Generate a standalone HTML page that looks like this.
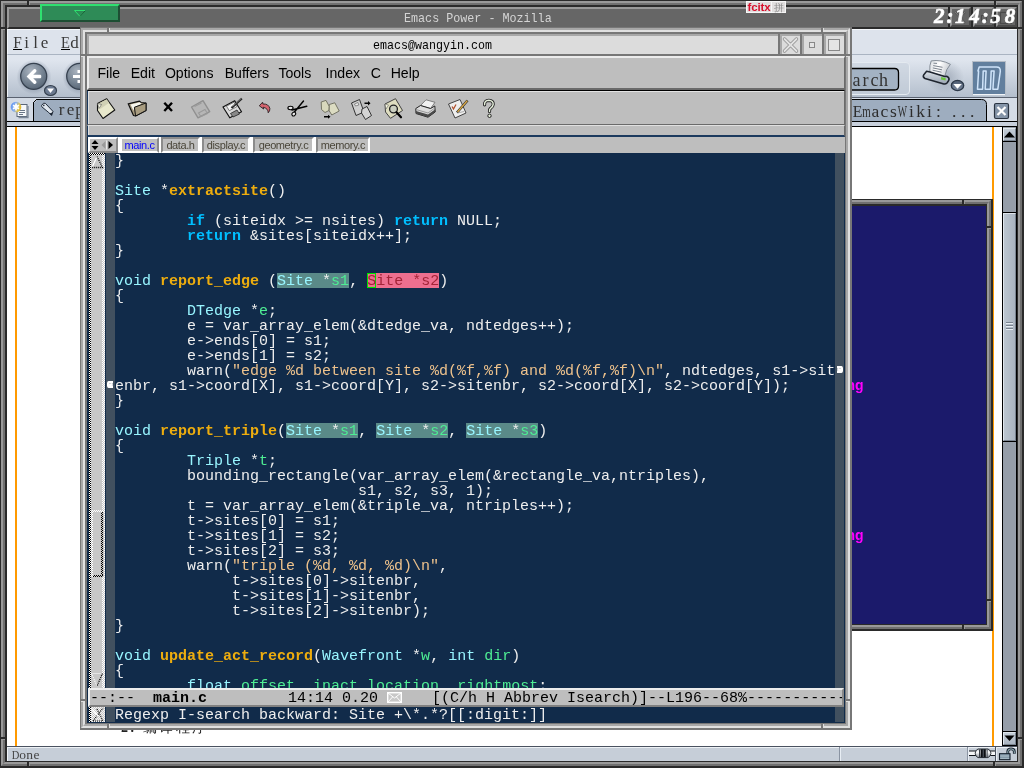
<!DOCTYPE html>
<html>
<head>
<meta charset="utf-8">
<title>Emacs Power - Mozilla</title>
<style>
html,body{margin:0;padding:0;}
body{width:1024px;height:768px;overflow:hidden;position:relative;background:#fff;font-family:"Liberation Sans",sans-serif;}
.a{position:absolute;}
div,pre,span,svg{box-sizing:border-box;}
/* generic nested ring frame */
.ring{position:absolute;left:0;top:0;right:0;bottom:0;border-style:solid;}
/* ---------- Mozilla outer window frame ---------- */
#mzA{left:0;top:0;width:1024px;height:768px;border-style:solid;border-color:#2a2a2a;border-width:1px 2px 2px 1px;background:#707070;}
#mzB{left:1px;top:1px;width:1021px;height:765px;border:2px solid;border-color:#999 #707070 #707070 #999;}
#mzC{left:3px;top:3px;width:1017px;height:761px;border:2px solid;border-color:#707070 #999 #999 #707070;}
#mzD{left:5px;top:5px;width:1013px;height:757px;border-style:solid;border-color:#2a2a2a;border-width:2px 1px 1px 2px;background:#fff;}
.nd{background:#2a2a2a;} .nl{background:#999;}
#mz-title{left:7px;top:7px;width:1010px;height:22px;background:#666;border-top:2px solid #999;border-left:2px solid #999;border-bottom:2px solid #2a2a2a;}
#mz-title-text{left:404px;top:10.5px;height:16px;color:#d4d4d4;font-family:"Liberation Mono",monospace;font-size:11.72px;letter-spacing:0;transform:scaleY(1.12);transform-origin:0 50%;white-space:nowrap;line-height:16px;}
#green{left:40px;top:4px;width:80px;height:18px;background:#2e8b57;border:2px solid;border-color:#2fe070 #1d4e33 #1d4e33 #2fe070;}
#mz-menu{left:7px;top:29px;width:1010px;height:25px;background:#dde3ec;border-top:1px solid #f4f7fa;border-left:1px solid #f4f7fa;}
#mz-tool{left:7px;top:54px;width:1010px;height:43px;background:linear-gradient(#dfe5ee,#dfe5ee 12%,#b4bfcd);border-top:1px solid #aab4c2;border-left:1px solid #eef2f6;}
#mz-tabs{left:7px;top:97px;width:1010px;height:30px;background:#d6dde7;border-top:1px solid #5a6270;}
#mz-content{left:7px;top:127px;width:995px;height:619px;background:#fff;}
#mz-status{left:7px;top:746px;width:1010px;height:15px;background:#c6ced8;border-top:1px solid #4a5260;box-shadow:inset 1px 1px 0 #eef2f6;}
.mztxt{font-family:"Liberation Serif",serif;color:#333;white-space:nowrap;}
.orange{background:#ff9a00;width:2px;top:127px;height:619px;}
/* ---------- blue window ---------- */
#blA{left:845px;top:199px;width:148px;height:432px;border-style:solid;border-color:#2a2a2a;border-width:1px 2px 2px 1px;}
#blB{left:846px;top:200px;width:145px;height:429px;border:2px solid;border-color:#999 #707070 #707070 #999;}
#blC{left:848px;top:202px;width:141px;height:425px;border:2px solid;border-color:#707070 #999 #999 #707070;}
#blD{left:850px;top:204px;width:137px;height:421px;border-style:solid;border-color:#2a2a2a;border-width:2px 1px 1px 2px;background:#1b1a6b;}
.mag{color:#ff00ff;font-weight:bold;font-size:14px;line-height:15px;left:846.5px;}
.mtb{top:7px;height:20px;border:2px solid;border-color:#999 #4a4a4a #4a4a4a #999;}
.clk{font-family:"Liberation Serif",serif;font-weight:bold;font-style:italic;font-size:21px;line-height:26px;color:#fff;white-space:nowrap;-webkit-text-stroke:0.6px #fff;}
.clk span{display:inline-block;width:14.4px;text-align:center;}
.clk i{display:inline-block;width:6.6px;text-align:center;}
</style>
</head>
<body>
<div id="root" class="a" style="left:0;top:0;width:1024px;height:768px;will-change:transform">
<!-- Mozilla frame -->
<div class="a" id="mzA"></div><div class="a" id="mzB"></div><div class="a" id="mzC"></div><div class="a" id="mzD"></div>
<!-- frame notches -->
<div class="a nd" style="left:27px;top:1px;width:2px;height:4px"></div><div class="a nl" style="left:29px;top:1px;width:1px;height:4px"></div>
<div class="a nd" style="left:994px;top:1px;width:2px;height:4px"></div><div class="a nl" style="left:996px;top:1px;width:1px;height:4px"></div>
<div class="a nd" style="left:1px;top:27px;width:4px;height:2px"></div><div class="a nl" style="left:1px;top:29px;width:4px;height:1px"></div>
<div class="a nd" style="left:1018px;top:27px;width:4px;height:2px"></div><div class="a nl" style="left:1018px;top:29px;width:4px;height:1px"></div>
<div class="a nd" style="left:1px;top:737px;width:4px;height:2px"></div><div class="a nl" style="left:1px;top:739px;width:4px;height:1px"></div>
<div class="a nd" style="left:1018px;top:737px;width:4px;height:2px"></div><div class="a nl" style="left:1018px;top:739px;width:4px;height:1px"></div>
<div class="a nd" style="left:27px;top:762px;width:2px;height:4px"></div><div class="a nl" style="left:29px;top:762px;width:1px;height:4px"></div>
<div class="a nd" style="left:993px;top:762px;width:2px;height:4px"></div><div class="a nl" style="left:995px;top:762px;width:1px;height:4px"></div>
<!-- Mozilla title -->
<div class="a" id="mz-title"></div>
<div class="a" id="mz-title-text">Emacs Power - Mozilla</div>
<div class="a" id="green"><svg class="a" style="left:32px;top:4px" width="12" height="8" viewBox="0 0 12 8"><path d="M0.5 0.5 L11.5 0.5 L6 6.5 Z" fill="none" stroke="#2fe070" stroke-width="1"/><path d="M6 6.5 L11.5 0.5" stroke="#1d4e33" stroke-width="1" fill="none"/></svg></div>
<!-- Mozilla chrome -->
<div class="a" id="mz-menu"></div>
<div class="a" id="mz-tool"></div>
<div class="a" id="mz-tabs"></div>
<div class="a" id="mz-content"></div>
<div class="a orange" style="left:15px"></div>
<div class="a orange" style="left:992px"></div>
<div class="a" id="mz-status"></div>
<style>
.cell span{display:inline-block;width:9px;text-align:center;}
.cell{font-family:"Liberation Serif",serif;font-size:17px;line-height:20px;color:#3a3a3a;white-space:nowrap;height:20px;}
.cell u{text-decoration:none;display:inline-block;width:9px;text-align:center;}
#mz-tabline{left:7px;top:121px;width:1010px;height:6px;background:#c8d0dc;border-top:1px solid #000;border-bottom:1px solid #000;}
.mztab{background:#9eadbf;}
#sb{left:1002px;top:127px;width:15px;height:619px;background:#969ea9;border-left:1px solid #000;border-right:1px solid #000;}
.sbbtn{left:1003px;width:13px;height:13px;background:linear-gradient(#c4ced8,#aab4c0);border:1px solid;border-color:#e0e6ec #7a8490 #7a8490 #e0e6ec;}
</style>
<!-- Mozilla menu text -->
<div class="a cell" style="left:13px;top:32.5px"><u><b style="display:inline-block;font-weight:normal;width:17px;margin-left:-4px;text-align:center;transform:scaleX(0.9)">F</b></u><span>i</span><span>l</span><span>e</span></div>
<div class="a cell" style="left:61px;top:32.5px"><u><b style="display:inline-block;font-weight:normal;width:17px;margin-left:-4px;text-align:center;transform:scaleX(0.86)">E</b></u><span>d</span></div>
<div class="a" style="left:13px;top:49px;width:9px;height:1.3px;background:#000"></div><div class="a" style="left:61px;top:49px;width:9px;height:1.3px;background:#000"></div>
<!-- Mozilla toolbar buttons -->
<svg class="a" style="left:7px;top:55px" width="80" height="42" viewBox="0 0 80 42">
 <defs>
  <radialGradient id="bg1" cx="0.4" cy="0.3" r="0.8"><stop offset="0" stop-color="#a9b3bf"/><stop offset="0.6" stop-color="#72808f"/><stop offset="1" stop-color="#505e6e"/></radialGradient>
  <radialGradient id="halo" cx="0.5" cy="0.5" r="0.5"><stop offset="0.7" stop-color="#8894a6" stop-opacity="0.55"/><stop offset="1" stop-color="#8894a6" stop-opacity="0"/></radialGradient>
 </defs>
 <circle cx="27" cy="22" r="17.5" fill="url(#halo)"/>
 <circle cx="26.7" cy="21.3" r="13" fill="url(#bg1)" stroke="#36414f" stroke-width="1.3"/>
 <path d="M19.6 21.5 L26.8 14.3 Q28.3 13.6 29.3 15 Q29.8 16.2 29 17 L26.2 19.8 L33.5 19.8 Q34.3 19.9 34.3 21.5 Q34.3 23.1 33.5 23.2 L26.2 23.2 L29 26 Q29.8 26.9 29.3 28 Q28.3 29.4 26.8 28.7 Z" fill="#fff"/>
 <ellipse cx="43.5" cy="35.5" rx="6" ry="5" fill="#6c7a90" stroke="#36414f" stroke-width="1.2"/>
 <path d="M40 33.5 L47 33.5 L43.5 38 Z" fill="#fff"/>
 <circle cx="73" cy="22" r="17.5" fill="url(#halo)"/>
 <circle cx="72.7" cy="21.3" r="13" fill="url(#bg1)" stroke="#36414f" stroke-width="1.3"/>
 <path d="M66 20 L74 20 L74 23 L66 23 Z M70.5 15 L73 15 L73 18 L70.5 18 Z M70.5 25 L73 25 L73 28 L70.5 28 Z" fill="#fff"/>
</svg>
<!-- Mozilla tab bar -->
<svg class="a" style="left:7px;top:98px" width="80" height="24" viewBox="0 0 80 24">
 <defs><linearGradient id="orb" x1="0" y1="0.3" x2="1" y2="0.6"><stop offset="0" stop-color="#5e94f4"/><stop offset="0.45" stop-color="#8eb2ea"/><stop offset="0.75" stop-color="#e4c850"/><stop offset="1" stop-color="#e0b428"/></linearGradient></defs>
 <rect x="0" y="0" width="27" height="23" fill="#d3dae4"/>
 <path d="M26.5 24 L26.5 4.5 L29.5 1.5 L80 1.5" fill="#9eadbf" stroke="#000" stroke-width="1"/>
 <rect x="27" y="2" width="53" height="22" fill="#9eadbf"/><path d="M27 2 L27 5 L30 2 Z" fill="#d3dae4"/><path d="M26.5 24 L26.5 4.5 L29.5 1.5 L80 1.5" fill="none" stroke="#000" stroke-width="1"/>
 <rect x="10" y="6.5" width="10" height="12" fill="#f6f8fa" stroke="#5a6678" stroke-width="1"/>
 <path d="M12 12.5h6M12 14.5h6M12 16.5h4" stroke="#6a7688" stroke-width="1"/>
 <path d="M21 8 V19.5 H11.5" stroke="#7c8898" stroke-width="1.3" fill="none"/>
 <circle cx="9" cy="9" r="5.3" fill="url(#orb)"/>
 <path d="M9 5.5v7M6 7.3l6 3.4M12 7.3l-6 3.4" stroke="#fff" stroke-width="1.7"/>
 <path d="M34.6 7.4 L36.6 5.2 L38.4 5.4 L46 13.4 L44.6 17.4 L41.8 14.6 L34.8 8.8 Z" fill="#dfe6ee" stroke="#222c3a" stroke-width="1"/><circle cx="36.8" cy="7.4" r="0.8" fill="#222c3a"/>
 <path d="M42 14.8 L44.6 17.8 L45.9 13.5 L44 15.2 Z" fill="#1a2432"/>
</svg>
<div class="a cell" style="left:57px;top:100px;font-size:17px;color:#333"><span>r</span><span>e</span><span>p</span></div>
<div class="a" id="mz-tabline"></div>
<!-- Mozilla right-side toolbar -->
<svg class="a" style="left:845px;top:55px" width="172" height="42" viewBox="0 0 172 42">
 <defs>
  <linearGradient id="pb" x1="0" y1="0" x2="0" y2="1"><stop offset="0" stop-color="#dce2e8"/><stop offset="1" stop-color="#98a2b0"/></linearGradient>
  <linearGradient id="pp" x1="0" y1="0" x2="1" y2="0.3"><stop offset="0" stop-color="#d8dce0"/><stop offset="0.5" stop-color="#fff"/><stop offset="1" stop-color="#c8ccd2"/></linearGradient><linearGradient id="dd" x1="0" y1="0" x2="0" y2="1"><stop offset="0" stop-color="#4c5a6e"/><stop offset="1" stop-color="#7c8aa0"/></linearGradient><radialGradient id="halo2" cx="0.5" cy="0.5" r="0.5"><stop offset="0.3" stop-color="#8e99a8" stop-opacity="0.45"/><stop offset="1" stop-color="#8e99a8" stop-opacity="0"/></radialGradient>
 </defs>
 <!-- search container -->
 <path d="M0 7.5 H61 Q64.5 7.5 64.5 11 V36 Q64.5 39.5 61 39.5 H0" fill="#c9d1dc" fill-opacity="0.55" stroke="#e4eaf0" stroke-width="1"/>
 <!-- search button -->
 <path d="M0 13.5 H49.5 Q53.5 13.5 53.5 17.5 V31 Q53.5 35 49.5 35 H0 Z" fill="#a3b2c3" stroke="#000" stroke-width="1.3"/>
 <!-- printer -->
 <ellipse cx="100" cy="22" rx="19" ry="17" fill="url(#halo2)"/>
 <path d="M86.200 5.900 Q96 4.300 105.400 9.300 Q101 14 99.700 21.500 L84.800 17 Q84.300 10 86.200 5.900 Z" fill="url(#pp)" stroke="#7c848e" stroke-width="0.900"/>
 <path d="M88.500 8.200 L92 8.400 M88.200 10.600 L97.500 12.300 M87.800 12.900 L97 14.800 M87.600 15.200 L96.500 17.200" stroke="#7c848e" stroke-width="1"/>
 <path d="M81.600 16.200 L85 17 L99.700 21.500 L102 21.300 Q105 23 103.700 25.500 L102 28 Q100.500 29.500 98 28.800 L80 23.500 Q77.500 22 78.600 20 Z" fill="url(#pb)" stroke="#1e242e" stroke-width="1.500" stroke-linejoin="round"/>
 <path d="M96.200 22 L100.800 23.200 L100.500 25.600 L96 24.400 Z" fill="#6cc43c"/>
 <ellipse cx="112.500" cy="30.500" rx="6.200" ry="5.100" fill="url(#dd)" stroke="#2c3848" stroke-width="1.300"/>
 <path d="M108.300 29 L116.800 29 L112.500 33.700 Z" fill="#fff"/>
 <!-- m logo -->
 <rect x="127.500" y="6.500" width="33" height="33" fill="#627f9e" stroke="#b4bcc6" stroke-width="1"/>
 <rect x="128" y="7" width="32" height="32" fill="#627f9e"/>
 <rect x="128" y="39" width="32" height="1.200" fill="#f0f4f8"/>
 <path d="M134.200 11.900 H151.500 Q155.600 11.900 155.300 16.500 L152.800 34.200 H147.900 L149.100 15.900 H146.200 L145.400 34.200 H140.200 L141.100 15.900 H138.200 L137.600 34.200 H132.500 L133.600 15.900 H132.900 Z" fill="none" stroke="#cfe4fa" stroke-width="1.500" stroke-linejoin="round"/>
</svg>
<div class="a cell" style="left:852px;top:70px;font-size:18px;color:#333;letter-spacing:0"><span>a</span><span>r</span><span>c</span><span>h</span></div>
<!-- Mozilla right tab -->
<svg class="a" style="left:845px;top:98px" width="172" height="24" viewBox="0 0 172 24">
 <path d="M0 1.500 H136.500 Q141.500 1.500 141.500 6.500 V24 H0 Z" fill="#9eadbf" stroke="#000" stroke-width="1"/>
 <rect x="149.500" y="5.500" width="14" height="15" rx="1.500" fill="#8494a8" stroke="#2a3442" stroke-width="1.200"/>
 <path d="M152.500 9 L160.500 17 M160.500 9 L152.500 17" stroke="#fff" stroke-width="2.200"/>
</svg>
<div class="a cell" style="left:853px;top:101px;font-size:17.5px;color:#2c2c2c"><span><b style="display:inline-block;font-weight:normal;width:21px;margin-left:-6px;text-align:center;transform:scaleX(0.9)">E</b></span><span><b style="display:inline-block;font-weight:normal;width:21px;margin-left:-6px;text-align:center;transform:scaleX(0.62)">m</b></span><span>a</span><span>c</span><span>s</span><span><b style="display:inline-block;font-weight:normal;width:21px;margin-left:-6px;text-align:center;transform:scaleX(0.56)">W</b></span><span>i</span><span>k</span><span>i</span><span>:</span><span> </span><span style="text-align:left">.</span><span style="text-align:left">.</span><span style="text-align:left">.</span></div>
<div class="a" id="mz-tabline2" style="left:845px;top:121px;width:172px;height:6px;background:#c8d0dc;border-top:1px solid #000;border-bottom:1px solid #000;"></div>
<!-- scrollbar -->
<div class="a" id="sb"></div>
<div class="a sbbtn" style="top:128px"></div>
<svg class="a" style="left:1004px;top:131px" width="11" height="7"><path d="M0 6.500 L5.500 0.500 L11 6.500 Z" fill="#000"/></svg>
<div class="a" style="left:1003px;top:141px;width:13px;height:1px;background:#000"></div><div class="a" style="left:1003px;top:212px;width:13px;height:1px;background:#000"></div><div class="a" style="left:1003px;top:441px;width:13px;height:1px;background:#000"></div>
<div class="a" style="left:1003px;top:213px;width:13px;height:228px;background:linear-gradient(90deg,#bcc6d0,#aab4c0);border:1px solid;border-color:#e0e6ec #7a8490 #7a8490 #e0e6ec;"></div>
<div class="a" style="left:1006px;top:322px;width:7px;height:1px;background:#7a8490;box-shadow:0 3px 0 #7a8490,0 6px 0 #7a8490,0 1px 0 #e8eef4,0 4px 0 #e8eef4,0 7px 0 #e8eef4"></div>
<div class="a" style="left:1003px;top:731px;width:13px;height:1px;background:#000"></div>
<div class="a sbbtn" style="top:732px;height:13px"></div><div class="a" style="left:1003px;top:745px;width:13px;height:1px;background:#000"></div>
<svg class="a" style="left:1004px;top:735px" width="11" height="7"><path d="M0.500 0.500 L10.500 0.500 L5.500 6 Z" fill="#000"/></svg>
<!-- status bar -->
<div class="a cell" style="left:12px;top:747px;font-size:13.5px;line-height:15px;height:15px;color:#444"><span style="width:7px"><b style="display:inline-block;font-weight:normal;width:17px;margin-left:-5px;text-align:center;transform:scaleX(0.78)">D</b></span><span style="width:7px">o</span><span style="width:7px">n</span><span style="width:7px">e</span></div>
<div class="a" style="left:839px;top:747px;width:1px;height:14px;background:#8a94a2"></div><div class="a" style="left:840px;top:747px;width:1px;height:14px;background:#e8eef4"></div>
<div class="a" style="left:967px;top:747px;width:1px;height:14px;background:#8a94a2"></div><div class="a" style="left:968px;top:747px;width:1px;height:14px;background:#e8eef4"></div>
<div class="a" style="left:995px;top:747px;width:1px;height:14px;background:#4a5260"></div><div class="a" style="left:996px;top:747px;width:1px;height:14px;background:#e8eef4"></div>
<svg class="a" style="left:968px;top:747px" width="49" height="14" viewBox="0 0 49 14">
 <defs><linearGradient id="cn" x1="0" y1="0" x2="0" y2="1"><stop offset="0" stop-color="#b8c0c8"/><stop offset="0.35" stop-color="#fff"/><stop offset="1" stop-color="#8a929c"/></linearGradient></defs>
 <rect x="1" y="4" width="26" height="4.500" fill="#f4f6f8"/>
 <path d="M1 4 H27 M1 8.500 H27" stroke="#10141a" stroke-width="1"/>
 <path d="M10 2 H20 Q22.500 3 23 6.200 Q22.500 9.600 20 10.600 H10 Q7.500 9.600 7.200 6.200 Q7.500 3 10 2 Z" fill="url(#cn)" stroke="#20262e" stroke-width="0.900"/>
 <rect x="12.600" y="2.200" width="5.200" height="8.200" fill="#0c0e12"/>
 <rect x="11" y="2.400" width="1" height="7.800" fill="#3a4048"/><rect x="18.600" y="2.400" width="1" height="7.800" fill="#3a4048"/>
 <rect x="14.700" y="2.600" width="1" height="7.400" fill="#5a626c"/>
 <path d="M39.800 7 V4.600 Q39.800 1.900 43 1.900 Q46.300 1.900 46.300 4.600 V6.800" fill="none" stroke="#16202c" stroke-width="2.800"/>
 <path d="M39.800 7 V4.600 Q39.800 1.900 43 1.900 Q46.300 1.900 46.300 4.600 V6.400" fill="none" stroke="#c4e4ec" stroke-width="0.800"/>
 <rect x="31.500" y="6.700" width="10.500" height="6" fill="#6e8698" stroke="#16202c" stroke-width="1.100"/>
 <path d="M32.200 8.200h9M32.200 9.800h9M32.200 11.400h9" stroke="#c4d4dc" stroke-width="0.700"/>
</svg>
<style>
/* ---------- blue window ---------- */
/* ---------- Emacs window ---------- */
#emA{left:80px;top:27px;width:772px;height:703px;border-style:solid;border-color:#777;border-width:1px 2px 2px 1px;background:#a8a8a8;}
#emB{left:81px;top:28px;width:769px;height:700px;border:2px solid;border-color:#a8a8a8 #e0e0e0 #e0e0e0 #a8a8a8;}
#emC{left:83px;top:30px;width:765px;height:696px;border:2px solid;border-color:#e0e0e0 #a8a8a8 #a8a8a8 #e0e0e0;}
#emD{left:85px;top:32px;width:761px;height:692px;border-style:solid;border-color:#777;border-width:2px 1px 1px 2px;background:#112b4a;}
.ed{background:#777}.el{background:#e0e0e0}
#em-title{left:87px;top:34px;width:691px;height:20px;background:#dcdcdc;border-top:2px solid #a8a8a8;border-left:2px solid #a8a8a8;}
#em-title-text{left:373px;top:38.5px;font-family:"Liberation Mono",monospace;font-size:11.67px;line-height:15px;color:#000;white-space:nowrap;transform:scaleY(1.15);transform-origin:0 50%;}
.tbtn{top:34px;height:20px;background:#dcdcdc;border-style:solid;border-color:#a8a8a8;border-width:2px 0 0 2px;}
#em-tsep{left:87px;top:54px;width:758px;height:2px;background:#777;}
#em-menu{left:87px;top:56px;width:758px;height:34px;background:#bebebe;border-top:2px solid #ececec;border-left:2px solid #ececec;border-bottom:2px solid #6a6a6a;border-right:1px solid #6a6a6a;}
.mi{top:64px;font-size:14.1px;line-height:18px;color:#000;white-space:pre;}
#em-tool{left:87px;top:90px;width:758px;border-right:1px solid #6a6a6a;height:35px;background:#bebebe;border-top:1px solid #000;border-bottom:1px solid #6a6a6a;border-left:1px solid #1c3a5e;}
#em-tool-hl{left:88px;top:91px;width:756px;height:1px;background:#e4e4e4;}
#em-gap{left:87px;top:125px;width:758px;border-right:1px solid #6a6a6a;height:12px;background:#bebebe;border-bottom:2px solid #1c3a5e;border-top:1px solid #e0e0e0;border-left:1px solid #1c3a5e;}
#em-tabbar{left:88px;top:137px;width:757px;height:16px;background:#bebebe;}
.etab{top:137px;height:16px;background:#bebebe;border:2px solid;border-color:#8c8c8c #fff #fff #8c8c8c;font-size:11px;line-height:12px;color:#4a463a;text-align:center;white-space:nowrap;letter-spacing:-0.4px;overflow:hidden;}
.etab.sel{border-color:#fff #8c8c8c #fff #fff;color:#0000ff;}
#em-edit{left:87px;top:153px;width:758px;height:570px;background:#112b4a;overflow:hidden;}
#code,.mono15{font-family:"Liberation Mono",monospace;font-size:15px;line-height:15px;white-space:pre;}
#code{left:28px;top:0.5px;margin:0;color:#eeeeee;}
.t{color:#98f5ff}.f{color:#eead0e;font-weight:bold}.k{color:#00bfff;font-weight:bold}.s{color:#eec28c}.v{color:#4eee94}
.h{background:#5a8a88}.hc{background:#ee6f8f}.cur{color:#a42438}
#fringe{left:19px;top:0;width:9px;height:569px;background:#41505f;}
#rfringe{left:748px;top:0;width:9px;height:569px;background:#41505f;}
#esb{left:2px;top:0;width:16px;height:535px;background:#c8c8c8;}
.stip{background:repeating-conic-gradient(#000 0 25%,#fff 0 50%) 0 0/2px 2px;}
.stipw{background:repeating-conic-gradient(#fff 0 25%,#c8c8c8 0 50%) 0 0/2px 2px;}
.stipb{background:repeating-conic-gradient(#000 0 25%,#c8c8c8 0 50%) 0 0/2px 2px;}
#modeline{left:1px;top:535px;width:756px;height:19px;background:#bebebe;border-top:2px solid #ececec;border-left:2px solid #f0f0f0;border-bottom:2px solid #808080;border-right:2px solid #888;color:#000;overflow:hidden;}
</style>
<!-- blue window (behind emacs) -->
<div class="a" id="blA"></div><div class="a" id="blB"></div><div class="a" id="blC"></div><div class="a" id="blD"></div>
<div class="a nd" style="left:962px;top:200px;width:2px;height:4px"></div><div class="a nl" style="left:964px;top:200px;width:1px;height:4px"></div>
<div class="a nd" style="left:987px;top:226px;width:4px;height:2px"></div><div class="a nl" style="left:987px;top:228px;width:4px;height:1px"></div>
<div class="a nd" style="left:987px;top:599px;width:4px;height:2px"></div><div class="a nl" style="left:987px;top:601px;width:4px;height:1px"></div>
<div class="a nd" style="left:962px;top:625px;width:2px;height:4px"></div><div class="a nl" style="left:964px;top:625px;width:1px;height:4px"></div>
<div class="a mag" style="top:378px">ng</div>
<div class="a mag" style="top:528px">ng</div>
<!-- chinese-ish text remnants below emacs -->
<div class="a" style="left:121px;top:730px;width:86px;height:4px;overflow:hidden"><div class="a" style="left:0;top:-9px;font-size:14px;line-height:14px;white-space:nowrap;color:#222;font-family:'Liberation Serif',serif;letter-spacing:2.5px"><b>2.</b> 编译程序</div></div>
<!-- EMACS frame -->
<div class="a" id="emA"></div><div class="a" id="emB"></div><div class="a" id="emC"></div><div class="a" id="emD"></div>
<div class="a ed" style="left:107px;top:28px;width:2px;height:4px"></div><div class="a el" style="left:109px;top:28px;width:1px;height:4px"></div>
<div class="a ed" style="left:821px;top:28px;width:2px;height:4px"></div><div class="a el" style="left:823px;top:28px;width:1px;height:4px"></div>
<div class="a ed" style="left:81px;top:54px;width:4px;height:2px"></div><div class="a el" style="left:81px;top:56px;width:4px;height:1px"></div>
<div class="a ed" style="left:846px;top:54px;width:4px;height:2px"></div><div class="a el" style="left:846px;top:56px;width:4px;height:1px"></div>
<div class="a ed" style="left:81px;top:699px;width:4px;height:2px"></div><div class="a el" style="left:81px;top:701px;width:4px;height:1px"></div>
<div class="a ed" style="left:846px;top:699px;width:4px;height:2px"></div><div class="a el" style="left:846px;top:701px;width:4px;height:1px"></div>
<div class="a ed" style="left:107px;top:724px;width:2px;height:4px"></div><div class="a el" style="left:109px;top:724px;width:1px;height:4px"></div>
<div class="a ed" style="left:821px;top:724px;width:2px;height:4px"></div><div class="a el" style="left:823px;top:724px;width:1px;height:4px"></div>
<!-- title -->
<div class="a" id="em-title"></div>
<div class="a" id="em-title-text">emacs@wangyin.com</div>
<div class="a ed" style="left:778px;top:34px;width:2px;height:20px"></div>
<div class="a tbtn" style="left:780px;width:20px"></div>
<div class="a ed" style="left:800px;top:34px;width:2px;height:20px"></div>
<div class="a tbtn" style="left:802px;width:20px"></div>
<div class="a ed" style="left:822px;top:34px;width:2px;height:20px"></div>
<div class="a tbtn" style="left:824px;width:20px"></div>
<svg class="a" style="left:780px;top:34px" width="64" height="20" viewBox="0 0 64 20">
 <path d="M4.500 5 L16.500 17 M16.500 5 L4.500 17" stroke="#8c8c8c" stroke-width="3.400" stroke-linecap="round"/><path d="M4.500 5 L16.500 17 M16.500 5 L4.500 17" stroke="#e2e2e2" stroke-width="1.900" stroke-linecap="round"/>
 <rect x="29.500" y="8.500" width="5" height="5" fill="#e4e4e4" stroke="#888" stroke-width="1"/>
 <rect x="48.500" y="5.500" width="11" height="11" fill="#e4e4e4" stroke="#888" stroke-width="1"/>
</svg>
<div class="a" id="em-tsep"></div><div class="a ed" style="left:844px;top:34px;width:1px;height:22px"></div>
<!-- menu -->
<div class="a" id="em-menu"></div>
<div class="a mi" style="left:97.5px">File</div><div class="a mi" style="left:130.7px">Edit</div><div class="a mi" style="left:164.9px">Options</div><div class="a mi" style="left:224.7px">Buffers</div><div class="a mi" style="left:278.4px">Tools</div><div class="a mi" style="left:325.6px">Index</div><div class="a mi" style="left:370.7px">C</div><div class="a mi" style="left:390.7px">Help</div>
<!-- toolbar -->
<div class="a" id="em-tool"></div><div class="a" id="em-tool-hl"></div>
<div class="a" id="em-gap"></div><div class="a" style="left:88px;top:92px;width:1px;height:32px;background:#e0e0e0"></div><div class="a" style="left:88px;top:126px;width:1px;height:9px;background:#e0e0e0"></div>
<div class="a" id="em-tabbar"></div>
<!-- emacs toolbar icons: svg origin at (88,91) -->
<svg class="a" style="left:88px;top:91px" width="440" height="33" viewBox="88 91 440 33">
 <!-- 1 new -->
 <path d="M97.500 103.500 L106.700 98.700 L114.800 110 L103 118.500 L97.500 110.500 Z" fill="#e8e8cc" stroke="#111" stroke-width="1.100" stroke-linejoin="round"/>
 <path d="M99.500 103 L106.600 99.200 L109.200 102.800 L100.200 109 Z" fill="#cdcdb1" fill-opacity="0.900"/>
 <path d="M97.500 103.500 L101.500 104.500 L99 108.500 Z" fill="#f6f6e4" stroke="#555" stroke-width="0.600"/>
 <!-- 2 open -->
 <path d="M128.200 103.800 L139.500 101.200 L141 102.500 L146 103 L146 110.500 L135.600 116 L133.500 115.500 Z" fill="#a89c80" stroke="#111" stroke-width="1.200" stroke-linejoin="round"/>
 <path d="M130.500 104.500 L140 102.300 L141.500 104 L134.500 107 L133.500 110.500 Z" fill="#f8f8f0"/>
 <path d="M134.400 107.300 L146 103 L146 110.500 L135.600 116 Z" fill="#a89c80" stroke="#111" stroke-width="1"/>
 <!-- 3 X -->
 <path d="M164.300 102.800 L172 111 M172 102.800 L164.300 111" stroke="#000" stroke-width="2.400"/>
 <!-- 4 disabled floppy -->
 <path d="M191.500 107 L203 100.700 L209.700 111.700 L198 117.800 Z" fill="#b6b6b6" stroke="#909090" stroke-width="1.400" stroke-linejoin="round"/>
 <path d="M198.500 113 L205 109.500 L207.500 113.500 L201 116.500 Z M194.500 106.500 L201.500 103" fill="none" stroke="#9a9a9a" stroke-width="1.100"/>
 <!-- 5 save with pen -->
 <path d="M223 107 L234.700 100.700 L241.500 111.700 L229.800 117.800 Z" fill="#dadada" stroke="#111" stroke-width="1.200" stroke-linejoin="round"/>
 <path d="M226.500 106.200 L234 102.200 L236.800 106.700 L229.300 110.700 Z" fill="#f4f4f4" stroke="#555" stroke-width="0.700"/>
 <path d="M230.500 113.500 L237 110 L239.500 114 L233 117 Z" fill="#888" stroke="#222" stroke-width="0.800"/>
 <path d="M241.800 98.500 L231.500 108" stroke="#222" stroke-width="2.200"/><path d="M241.300 98.300 L232.500 106.500" stroke="#aaa" stroke-width="0.700"/>
 <!-- 6 undo -->
 <path d="M259.300 105.800 L262.600 102.200 L262.900 104 Q268.600 103.600 269.900 108.600 Q270 111 268.200 112.800 Q268.400 108.600 263.200 107.200 L263.600 109 Z" fill="#d4646e" stroke="#2a2024" stroke-width="0.900" stroke-linejoin="round"/>
 <!-- 7 scissors -->
 <path d="M303.500 101 L294 112.500 M306.800 106.300 L292 110" stroke="#000" stroke-width="1.400" stroke-linecap="round"/>
 <ellipse cx="290.500" cy="108" rx="2.600" ry="1.700" fill="#e8e8e8" stroke="#000" stroke-width="1.100"/>
 <ellipse cx="293.800" cy="114" rx="2.100" ry="1.700" fill="#e8e8e8" stroke="#000" stroke-width="1.100" transform="rotate(-40 293.800 114)"/>
 <!-- 8 copy -->
 <path d="M321.200 102 L326 100.400 L329.300 106.500 L329 110.500 L325 112.500 L321.500 109.500 Z" fill="#d8d8bc" stroke="#6a6a5a" stroke-width="0.900" stroke-linejoin="round"/>
 <path d="M329.300 104.500 L334.800 102.800 L339.200 111 L331.800 115 L329.200 110.800 Z" fill="#dcdcc2" stroke="#6a6a5a" stroke-width="0.900" stroke-linejoin="round"/>
 <path d="M324 116 H328 V114.800 L330.500 116.800 L328 118.800 V117.600 H324 Z" fill="#000"/>
 <!-- 9 paste -->
 <path d="M351.500 103 L359.500 99.500 L364 112 L356 115.500 Z" fill="#cfcfcf" stroke="#222" stroke-width="0.900"/>
 <path d="M354.500 104 L358 102.500 L358.800 105 L355.500 106 Z" fill="#eee" stroke="#555" stroke-width="0.600"/>
 <path d="M362 109 L367 106.500 L371.500 115.500 L365.500 119.500 L361.500 113 Z" fill="#d4d4d4" stroke="#222" stroke-width="0.900"/>
 <path d="M364.500 102.500 L368 102.500 L368 101 L370.500 103.200 L368 105.400 L368 104 L364.500 104 Z" fill="#000"/>
 <!-- 10 search doc -->
 <path d="M385 104 L395.500 98.700 L402.500 110.500 L390.500 118.300 L385.500 112 Z" fill="#deddc0" stroke="#333" stroke-width="0.900" stroke-linejoin="round"/>
 <path d="M385 104 L388.500 105 L386 109 Z" fill="#f4f4e0" stroke="#555" stroke-width="0.500"/>
 <circle cx="393.500" cy="109" r="3.900" fill="#c8ccc0" fill-opacity="0.850" stroke="#222" stroke-width="1.300"/>
 <path d="M396.500 112.300 L401 117.300" stroke="#000" stroke-width="2.200" stroke-linecap="round"/>
 <!-- 11 printer -->
 <path d="M420.500 105.500 L426 99.800 L435 102.300 L430.500 108.500 Z" fill="#f0f0f0" stroke="#666" stroke-width="0.800"/>
 <path d="M415.800 108.500 L420.500 105.500 L430.500 108.500 L434.800 106 L435.200 112 L428 117.200 L416 113.500 Z" fill="#dcdcdc" stroke="#222" stroke-width="1" stroke-linejoin="round"/>
 <path d="M416 111 L428 114.500 L435 109.500 L435.200 112 L428 117.200 L416 113.500 Z" fill="#4a4a4a"/>
 <path d="M416 109.500 L428 113 L434.500 108.200" stroke="#999" stroke-width="1" fill="none"/>
 <!-- 12 preferences -->
 <path d="M448.500 104 L460 99.500 L466 113 L455 118 Z" fill="#eeeeee" stroke="#333" stroke-width="0.900" stroke-linejoin="round"/>
 <path d="M452 106.500 L453.500 109 L456 104.500" stroke="#b0502c" stroke-width="1.300" fill="none"/>
 <path d="M467.500 100.500 L457 112.500" stroke="#222" stroke-width="2.600"/><path d="M467.200 100.800 L457.500 112" stroke="#d8a848" stroke-width="1.400"/>
 <path d="M457.500 113 L464 111.500" stroke="#999" stroke-width="0.800"/>
 <!-- 13 help -->
 <path d="M484.600 104.800 Q484.300 100.500 488.800 100.300 Q493.400 100.500 493.200 104.400 Q493 106.800 490.500 108.300 Q489.400 109.200 489.500 111.500" fill="none" stroke="#222" stroke-width="3.200" stroke-linecap="round"/>
 <path d="M484.600 104.800 Q484.300 100.500 488.800 100.300 Q493.400 100.500 493.200 104.400 Q493 106.800 490.500 108.300 Q489.400 109.200 489.500 111.500" fill="none" stroke="#e6f0dc" stroke-width="1.400" stroke-linecap="round"/>
 <circle cx="489.500" cy="115.800" r="1.700" fill="#e6f0dc" stroke="#222" stroke-width="1"/>
</svg>
<!-- emacs tab bar -->
<div class="a" style="left:88px;top:137px;width:30px;height:16px;background:#bebebe;border:2px solid;border-color:#fff #8c8c8c #8c8c8c #fff"></div>
<svg class="a" style="left:88px;top:137px" width="30" height="16" viewBox="0 0 30 16">
 <path d="M3.500 7 L7 3 L10.500 7 Z M3.500 9 L10.500 9 L7 13 Z" fill="#000"/>
 <path d="M17.500 4 L17.500 12 L13.500 8 Z" fill="#9a9a9a"/><path d="M18.500 3.500 V12.500" stroke="#e8e8e8" stroke-width="1"/>
 <path d="M20.500 4 L20.500 12 L25 8 Z" fill="#000"/>
</svg>
<div class="a etab sel" style="left:120px;width:39px">main.c</div>
<div class="a etab" style="left:161px;width:39px">data.h</div>
<div class="a etab" style="left:202px;width:48px">display.c</div>
<div class="a etab" style="left:253px;width:61px">geometry.c</div>
<div class="a etab" style="left:316px;width:54px">memory.c</div>
<div class="a" style="left:118px;top:137px;width:2px;height:16px;background:#fff"></div>
<div class="a" style="left:159px;top:137px;width:2px;height:16px;background:#fff"></div>
<div class="a" style="left:200px;top:137px;width:2px;height:16px;background:#fff"></div>
<div class="a" style="left:250px;top:137px;width:3px;height:16px;background:#fff"></div>
<div class="a" style="left:314px;top:137px;width:2px;height:16px;background:#fff"></div>
<!-- emacs editor -->
<div class="a" id="em-edit">
 <div class="a" id="esb"></div>
 <div class="a stip" style="left:2px;top:0;width:2px;height:535px"></div>
 <div class="a stip" style="left:2px;top:0;width:16px;height:2px"></div>
 <div class="a stipw" style="left:15px;top:2px;width:3px;height:533px"></div>
 <!-- up arrow -->
 <svg class="a" style="left:2px;top:0" width="16" height="18" viewBox="0 0 16 18">
  <path d="M8 3.500 L3 14.500" stroke="#fff" stroke-width="1.200"/>
  <path d="M8 3.500 L13.500 14.500 L3 14.500" stroke="#000" stroke-width="1.300" stroke-dasharray="1 1" fill="none"/>
 </svg>
 <!-- thumb -->
 <div class="a" style="left:5px;top:358px;width:12px;height:66px;background:#c8c8c8"></div>
 <div class="a stipw" style="left:4px;top:357px;width:14px;height:2px"></div>
 <div class="a stipw" style="left:4px;top:357px;width:2px;height:67px"></div>
 <div class="a stipb" style="left:14px;top:359px;width:2px;height:65px"></div>
 <div class="a stipb" style="left:6px;top:422px;width:10px;height:2px"></div>
 <!-- down arrow -->
 <svg class="a" style="left:2px;top:518px" width="16" height="17" viewBox="0 0 16 17">
  <path d="M2.500 2.500 L13.500 2.500 M2.500 2.500 L8 15" stroke="#fff" stroke-width="1.200" stroke-dasharray="1 1"/>
  <path d="M13.500 2.500 L8 15" stroke="#000" stroke-width="1.300" stroke-dasharray="1 1" fill="none"/>
 </svg>
 <div class="a" id="fringe"></div>
 <div class="a" id="rfringe"></div>
<div class="a h" style="left:190px;top:120px;width:72px;height:15px"></div><div class="a hc" style="left:280px;top:120px;width:72px;height:15px"></div><div class="a" style="left:280px;top:120px;width:9px;height:15px;border:1px solid #00e400"></div><div class="a h" style="left:199px;top:270px;width:72px;height:15px"></div><div class="a h" style="left:289px;top:270px;width:72px;height:15px"></div><div class="a h" style="left:379px;top:270px;width:72px;height:15px"></div>
<pre class="a" id="code">}

<span class="t">Site</span> *<span class="f">extractsite</span>()
{
        <span class="k">if</span> (siteidx &gt;= nsites) <span class="k">return</span> NULL;
        <span class="k">return</span> &amp;sites[siteidx++];
}

<span class="t">void</span> <span class="f">report_edge</span> (<span><span class="t">Site</span> *<span class="v">s1</span></span>, <span class="cur">Site *s2</span>)
{
        <span class="t">DTedge</span> *<span class="v">e</span>;
        e = var_array_elem(&amp;dtedge_va, ndtedges++);
        e-&gt;ends[0] = s1;
        e-&gt;ends[1] = s2;
        warn(<span class="s">"edge %d between site %d(%f,%f) and %d(%f,%f)\n"</span>, ndtedges, s1-&gt;sit
enbr, s1-&gt;coord[X], s1-&gt;coord[Y], s2-&gt;sitenbr, s2-&gt;coord[X], s2-&gt;coord[Y]);
}

<span class="t">void</span> <span class="f">report_triple</span>(<span><span class="t">Site</span> *<span class="v">s1</span></span>, <span><span class="t">Site</span> *<span class="v">s2</span></span>, <span><span class="t">Site</span> *<span class="v">s3</span></span>)
{
        <span class="t">Triple</span> *<span class="v">t</span>;
        bounding_rectangle(var_array_elem(&amp;rectangle_va,ntriples),
                           s1, s2, s3, 1);
        t = var_array_elem(&amp;triple_va, ntriples++);
        t-&gt;sites[0] = s1;
        t-&gt;sites[1] = s2;
        t-&gt;sites[2] = s3;
        warn(<span class="s">"triple (%d, %d, %d)\n"</span>,
             t-&gt;sites[0]-&gt;sitenbr,
             t-&gt;sites[1]-&gt;sitenbr,
             t-&gt;sites[2]-&gt;sitenbr);
}

<span class="t">void</span> <span class="f">update_act_record</span>(<span class="t">Wavefront</span> *<span class="v">w</span>, <span class="t">int</span> <span class="v">dir</span>)
{
        <span class="t">float</span> <span class="v">offset</span>, <span class="v">inact_location</span>, <span class="v">rightmost</span>;
</pre>
 <!-- continuation glyphs in fringes -->
 <svg class="a" style="left:749px;top:212px" width="8" height="10" viewBox="0 0 8 10"><path d="M1 1 H5 Q7 1 7 3 V6 Q7 8 5 8 H1 V5.500 H2.500 L1 4 L3.500 2.500 V4 H4.500 V3 H1 Z" fill="#fff"/><path d="M1 1 H6 V8 H1 Z" fill="#fff" fill-opacity="0.550"/></svg>
 <svg class="a" style="left:19px;top:227px" width="8" height="10" viewBox="0 0 8 10"><path d="M7 1 H3 Q1 1 1 3 V6 Q1 8 3 8 H7 V5.500 H5.500 L7 4 L4.500 2.500 V4 H3.500 V3 H7 Z" fill="#fff"/><path d="M2 1 H7 V8 H2 Z" fill="#fff" fill-opacity="0.550"/></svg>
 <!-- mode line -->
 <div class="a" id="modeline"><div class="a mono15" style="left:0px;top:0.5px;">--:--  <b>main.c</b>         14:14 0.20      [(C/h H Abbrev Isearch)]--L196--68%-----------</div>
  <svg class="a" style="left:297px;top:2px" width="16" height="11" viewBox="0 0 16 11"><rect x="0.700" y="0.700" width="13.600" height="9.600" fill="#c8c8c8" stroke="#fff" stroke-width="1.400"/><path d="M1 1 L7.500 6 L14 1 M1 10 L5.500 5 M14 10 L9.500 5" stroke="#fff" stroke-width="1" fill="none"/></svg>
 </div>
 <!-- minibuffer -->
 <div class="a" style="left:2px;top:554px;width:16px;height:15px;background:#c8c8c8"></div>
 <div class="a stip" style="left:2px;top:554px;width:2px;height:15px"></div>
 <div class="a stipw" style="left:4px;top:554px;width:14px;height:15px;opacity:0.8"></div>
 <svg class="a" style="left:2px;top:554px" width="16" height="15" viewBox="0 0 16 15"><path d="M4 14 L14 1 M8 2 L14 14 M4 14 H14" stroke="#000" stroke-width="1.200" stroke-dasharray="1 1" fill="none"/><path d="M3 2 L9 9" stroke="#fff" stroke-width="1.200"/></svg>
 
 <div class="a mono15" style="left:28px;top:555px;color:#eeeeee">Regexp I-search backward: Site +\*.*?[[:digit:]]</div>
</div>
<!-- fcitx -->
<div class="a" style="left:746px;top:1px;width:40px;height:12px;background:#e0dede;border:1px solid #f6f6f6"></div>
<div class="a" style="left:771px;top:2px;width:1px;height:10px;background:#f6f6f6"></div>
<div class="a" style="left:747.5px;top:-0.5px;font-size:11.5px;line-height:14px;font-weight:bold;color:#d8102c;letter-spacing:-0.1px">fcitx</div>
<div class="a" style="left:774px;top:2px;font-size:10px;line-height:11px;color:#8c8c8c">拼</div>
<!-- title buttons behind clock -->
<div class="a" style="left:948px;top:7px;width:2px;height:20px;background:#2a2a2a"></div>
<div class="a mtb" style="left:950px;width:21px"></div>
<div class="a" style="left:971px;top:7px;width:2px;height:20px;background:#2a2a2a"></div>
<div class="a mtb" style="left:973px;width:21px"></div>
<div class="a" style="left:994px;top:7px;width:2px;height:20px;background:#2a2a2a"></div>
<div class="a mtb" style="left:996px;width:21px"></div>
<svg class="a" style="left:950px;top:7px" width="67" height="20" viewBox="0 0 67 20">
 <path d="M5 5 L15 16 M15 5 L5 16" stroke="#555" stroke-width="2"/><path d="M5 5 L15 16 M15 5 L5 16" stroke="#888" stroke-width="0.800"/>
 <rect x="31.500" y="8.500" width="5" height="5" fill="none" stroke="#4a4a4a" stroke-width="1"/>
 <rect x="50.500" y="5.500" width="11" height="11" fill="none" stroke="#4a4a4a" stroke-width="1.200"/>
</svg>
<!-- clock -->
<div class="a clk" style="left:932px;top:3px"><span>2</span><i>:</i><span>1</span><span>4</span><i>:</i><span>5</span><span>8</span></div>
</div>
</body>
</html>
